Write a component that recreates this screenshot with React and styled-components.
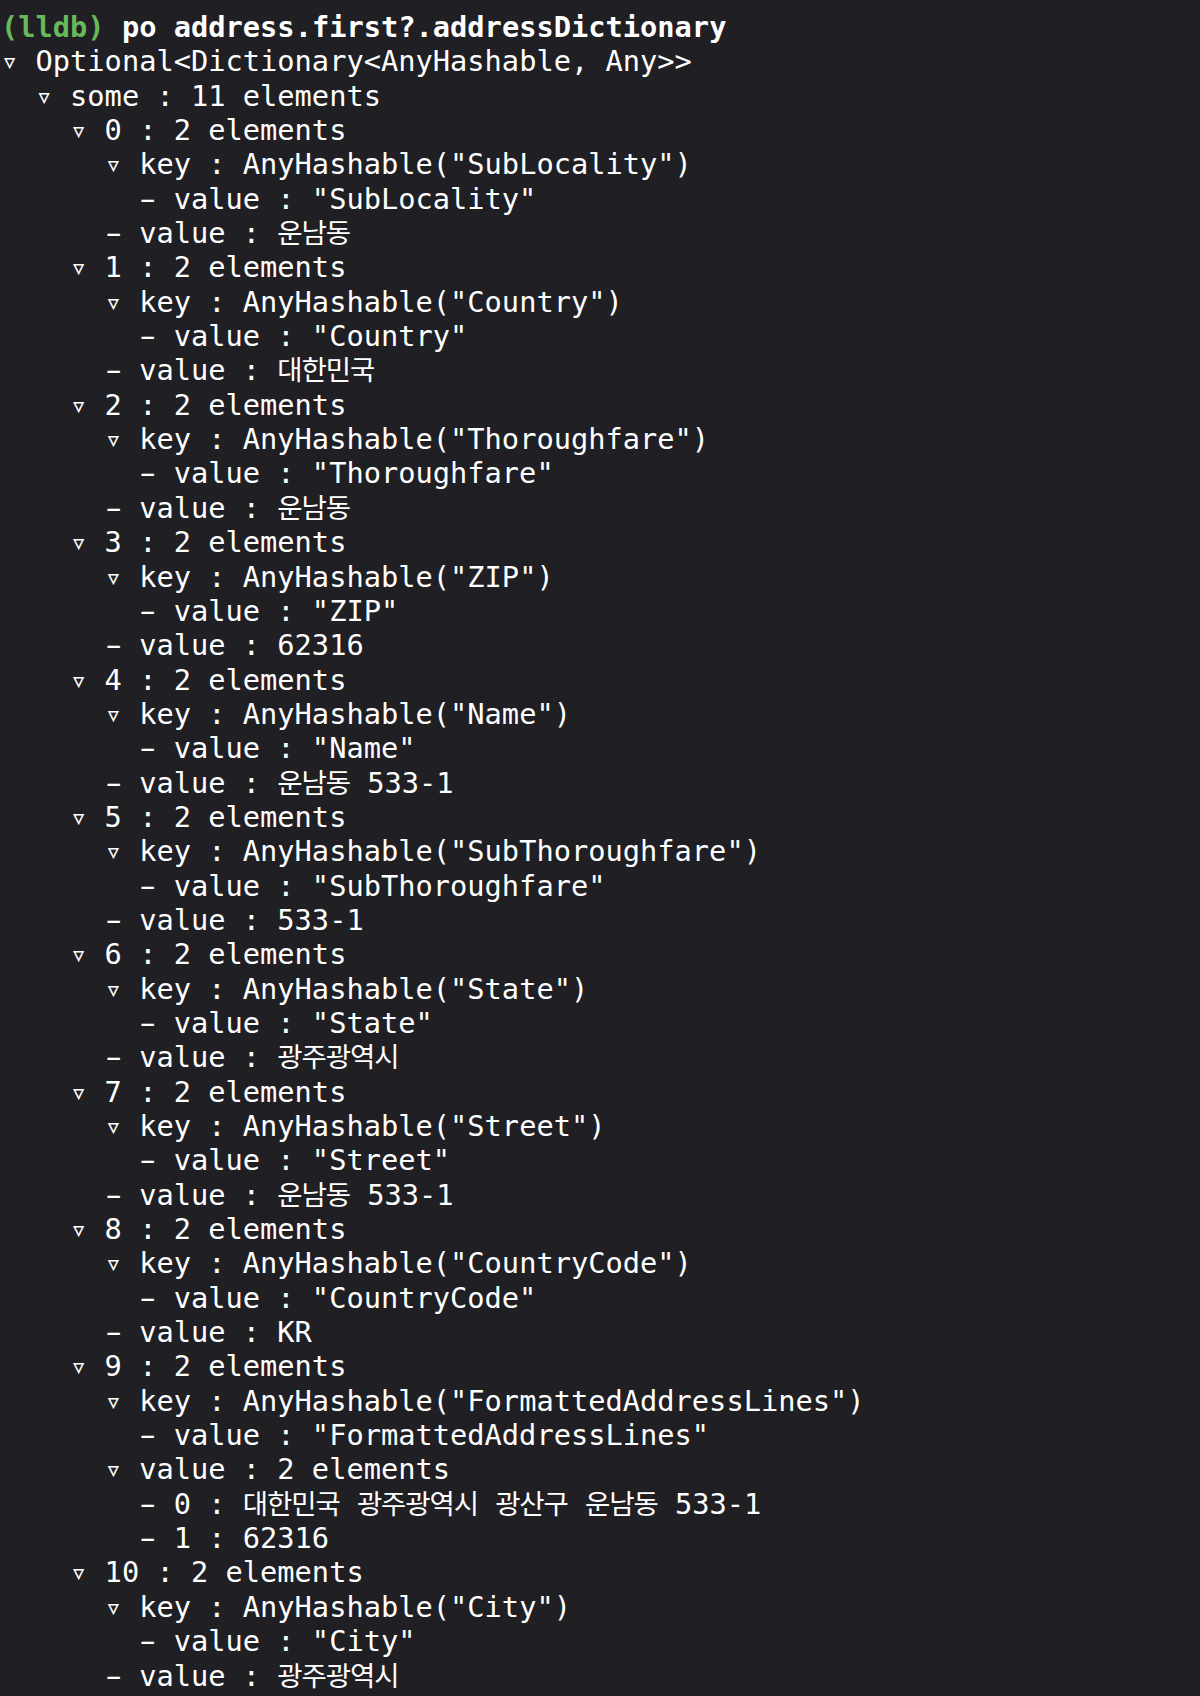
import React from 'react';
import styled, { createGlobalStyle } from 'styled-components';

const GlobalStyle = createGlobalStyle`
  html, body {
    margin: 0;
    padding: 0;
    background: #1f1f24;
  }
`

// Console window
export const Console = styled.div`
  width: 1200px;
  min-height: 1696px;
  box-sizing: border-box;
  padding: 10px 0 0 1px;
  background: #1f1f24;
  color: #ffffff;
  font-family: "DejaVu Sans Mono", "Liberation Mono", monospace;
  font-size: 28.7px;
  line-height: 34.35px;
  white-space: pre;
`
export const Line = styled.div`
  height: 34.35px;
  padding-left: ${p => p.$indent}ch;
  font-weight: ${p => (p.$bold ? 700 : 400)};
`
export const Prompt = styled.span`
  color: #67b95a;
`
export const Hangul = styled.span`
  font-family: "Noto Sans CJK KR", sans-serif;
  font-size: 27.5px;
  line-height: 1;
  letter-spacing: -1.1px;
`
export const Dash = styled.span`
  display: inline-block;
  transform: scaleX(1.7);
`
export const Arrow = styled.span`
  display: inline-block;
  width: 2ch;
`

const withHangul = (text) =>
  text.split(/([\uAC00-\uD7A3]+)/).map((part, i) =>
    /[\uAC00-\uD7A3]/.test(part) ? <Hangul key={i}>{part}</Hangul> : part
  )

const entries = [
  ['SubLocality', '운남동'],
  ['Country', '대한민국'],
  ['Thoroughfare', '운남동'],
  ['ZIP', '62316'],
  ['Name', '운남동 533-1'],
  ['SubThoroughfare', '533-1'],
  ['State', '광주광역시'],
  ['Street', '운남동 533-1'],
  ['CountryCode', 'KR'],
  ['FormattedAddressLines', ['대한민국 광주광역시 광산구 운남동 533-1', '62316']],
  ['City', '광주광역시'],
]

function Node({ indent, open, children }) {
  return (
    <Line $indent={indent}>
      <Arrow>{open ? '▿' : <Dash>-</Dash>}</Arrow>
      {withHangul(children)}
    </Line>
  )
}

export default function App() {
  return (
    <>
      <GlobalStyle />
      <Console>
        <Line $indent={0} $bold>
          <Prompt>(lldb)</Prompt> po address.first?.addressDictionary
        </Line>
        <Node indent={0} open>{'Optional<Dictionary<AnyHashable, Any>>'}</Node>
        <Node indent={2} open>some : 11 elements</Node>
        {entries.map(([key, value], i) => (
          <React.Fragment key={key}>
            <Node indent={4} open>{`${i} : 2 elements`}</Node>
            <Node indent={6} open>{`key : AnyHashable("${key}")`}</Node>
            <Node indent={8}>{`value : "${key}"`}</Node>
            {Array.isArray(value) ? (
              <>
                <Node indent={6} open>{`value : ${value.length} elements`}</Node>
                {value.map((v, j) => (
                  <Node key={j} indent={8}>{`${j} : ${v}`}</Node>
                ))}
              </>
            ) : (
              <Node indent={6}>{`value : ${value}`}</Node>
            )}
          </React.Fragment>
        ))}
      </Console>
    </>
  )
}
